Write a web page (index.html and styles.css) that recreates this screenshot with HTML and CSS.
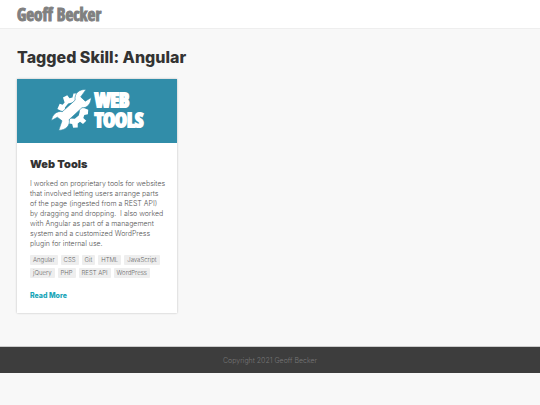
FILE: index.html
```html
<!DOCTYPE html>
<html lang="en">
<head>
<meta charset="utf-8">
<meta name="viewport" content="width=device-width, initial-scale=1">
<title>Tagged Skill: Angular</title>
<link rel="stylesheet" href="styles.css">
</head>
<body>
<header class="site-header"><a class="logo" href="#">Geoff Becker</a></header>
<main class="content">
  <h1 class="page-title">Tagged Skill: Angular</h1>
  <div class="projects">
    <article class="card">
      <div class="banner">
        <svg class="tools-icon" viewBox="10 12 124 128" aria-hidden="true">
          <g fill="#fff">
            <path d="M40 78L29 73L36 57L45 60L51 53L46 38L59 31L66 40L75 38L78 26L92 26L92 38L77 52L62 56L52 68L52 80Z"/>
            <path d="M106 68L123 75L122 89L111 91L108 100L117 109L107 119L98 112L91 117L91 129L77 130L74 119L62 116L68 102L82 103L94 93L97 82L97 72Z"/>
          </g>
          <path d="M116 14C98 11 80 24 83 46L44 81C28 78 13 89 11 108L29 98L43 109L33 138C53 138 69 124 65 105L104 69C119 71 132 57 132 38L114 49L100 36Z" fill="#fff" stroke="#318da9" stroke-width="2"/>
        </svg>
        <div class="banner-text"><div>WEB</div><div>TOOLS</div></div>
      </div>
      <div class="card-body">
        <h2 class="card-title">Web Tools</h2>
        <p class="summary">I worked on proprietary tools for websites that involved letting users arrange parts<br>of the page (ingested from a REST API)<br>by dragging and dropping. &nbsp;I also worked<br>with Angular as part of a management system and a customized WordPress plugin for internal use.</p>
        <ul class="tags">
          <li><a href="#">Angular</a></li><li><a href="#">CSS</a></li><li><a href="#">Git</a></li><li><a href="#">HTML</a></li><li><a href="#">JavaScript</a></li><li><a href="#">jQuery</a></li><li><a href="#">PHP</a></li><li><a href="#">REST API</a></li><li><a href="#">WordPress</a></li>
        </ul>
        <a class="more" href="#">Read More</a>
      </div>
    </article>
  </div>
</main>
<footer class="site-footer">Copyright 2021 Geoff Becker</footer>
</body>
</html>
```
FILE: styles.css
```css
* { box-sizing: border-box; }
body { margin: 0; background: #f8f8f8; color: #333; font-family: Inter, "Liberation Sans", sans-serif; font-size: 7px; }
a { color: inherit; text-decoration: none; }
.site-header { display: flex; align-items: center; padding: 5px 17px 3px; background: #fff; border-bottom: 1px solid #eee; }
.logo { color: #808080; font: bold 17px/20px "Open Sans Condensed", "Liberation Sans", sans-serif; -webkit-text-stroke: 1px #808080; }
.content { padding: 18px 17px 33px; }
.page-title { margin: 0 0 12px; font-size: 16px; line-height: 20px; font-weight: 800; }
.projects { display: grid; grid-template-columns: repeat(3, 1fr); gap: 13px; }
.card { background: #fff; box-shadow: 0 0 2px #bbb; }
.banner { display: flex; align-items: center; justify-content: center; gap: 3px; height: 64px; padding-bottom: 3px; background: #318da9; color: #fff; }
.tools-icon { width: 41px; height: 42px; }
.banner-text { font: bold 20px/20px "Open Sans Condensed", "Liberation Sans", sans-serif; -webkit-text-stroke: 2px #fff; }
.card-body { padding: 14px 10px 13px 13px; }
.card-title { margin: 0 0 7px; font-size: 11px; line-height: 15px; font-weight: 900; }
.summary { margin: 0 0 6px; color: #555; font-size: 7px; line-height: 10px; font-weight: 300; }
.tags { display: flex; flex-wrap: wrap; gap: 3px; margin: 0 0 13px; padding: 0; list-style: none; }
.tags a { display: block; padding: 0 3px; background: #eee; border-radius: 1px; color: #666; font-size: 6px; line-height: 10px; font-weight: 300; }
.more { display: block; color: #18a5b8; font-size: 7px; line-height: 9px; font-weight: 800; }
.site-footer { padding: 9px 17px 8px; border-top: 1px solid #ccc; background: #3d3d3d; color: #777; text-align: center; font-size: 7px; line-height: 9px; font-weight: 300; }
```
